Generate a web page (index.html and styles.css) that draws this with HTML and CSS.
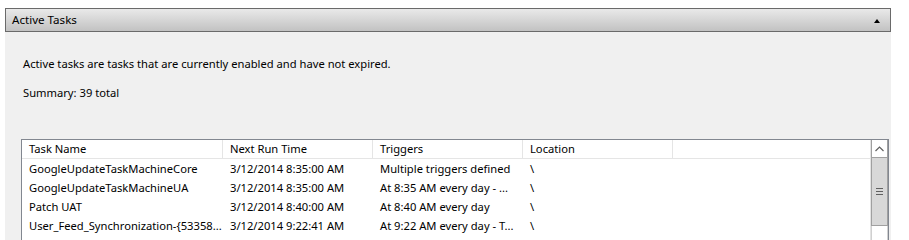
FILE: index.html
```html
<!DOCTYPE html>
<html>
<head>
<meta charset="utf-8">
<link rel="stylesheet" href="styles.css">
</head>
<body>
<div class="panel">
  <div class="panel-head">
    <span class="title">Active Tasks</span>
    <span class="collapse"></span>
  </div>
  <div class="panel-body">
    <p class="desc">Active tasks are tasks that are currently enabled and have not expired.</p>
    <p class="summary">Summary: 39 total</p>
    <div class="list">
      <div class="grid">
        <div class="hdr">
          <div class="hc c1">Task Name</div>
          <div class="hc c2">Next Run Time</div>
          <div class="hc c3">Triggers</div>
          <div class="hc c4">Location</div>
          <div class="hc c5"></div>
        </div>
        <div class="row"><div class="c1">GoogleUpdateTaskMachineCore</div><div class="c2">3/12/2014 8:35:00 AM</div><div class="c3">Multiple triggers defined</div><div class="c4">\</div></div>
        <div class="row"><div class="c1">GoogleUpdateTaskMachineUA</div><div class="c2">3/12/2014 8:35:00 AM</div><div class="c3">At 8:35 AM every day - ...</div><div class="c4">\</div></div>
        <div class="row"><div class="c1">Patch UAT</div><div class="c2">3/12/2014 8:40:00 AM</div><div class="c3">At 8:40 AM every day</div><div class="c4">\</div></div>
        <div class="row"><div class="c1">User_Feed_Synchronization-{53358...</div><div class="c2">3/12/2014 9:22:41 AM</div><div class="c3">At 9:22 AM every day - T...</div><div class="c4">\</div></div>
      </div>
      <div class="scroll">
        <div class="arrow"><svg width="9" height="6" viewBox="0 0 9 6"><path d="M0.5 5 L4.5 1 L8.5 5" fill="none" stroke="#606060" stroke-width="1.2"/></svg></div>
        <div class="thumb"><span class="grip"></span></div>
        <div class="track"></div>
      </div>
    </div>
  </div>
</div>
</body>
</html>
```
FILE: styles.css
```css
* { box-sizing: border-box; }
html, body { margin: 0; padding: 0; background: #fff; }
body {
  font-family: "Noto Sans", "Open Sans", sans-serif;
  font-size: 11.2px;
  color: #000;
  width: 909px;
  height: 240px;
  overflow: hidden;
  padding: 8px 0 0 5px;
}
.panel { width: 886px; }
.panel-head {
  height: 24px;
  border: 1px solid #6a6a6a;
  background: linear-gradient(#e9e9e9, #c2c2c2);
  display: flex;
  align-items: center;
  justify-content: space-between;
  padding: 0 10px 0 6px;
}
.title { font-size: 11.6px; color: #000; line-height: 16px; }
.collapse {
  width: 0; height: 0;
  border-left: 3px solid transparent;
  border-right: 3px solid transparent;
  border-bottom: 4px solid #000;
  margin-top: 1px;
}
.panel-body {
  background: #f0f0f0;
  height: 208px;
  overflow: hidden;
  padding: 17px 2px 0 18px;
}
.desc { margin: 0; line-height: 16px; padding-top: 7px; }
.summary { margin: 13px 0 0 0; line-height: 16px; }
.list {
  margin-top: 38px;
  margin-left: -2px;
  background: #fff;
  border: 1px solid #828790;
  height: 120px;
  display: flex;
  width: 868px;
}
.grid { flex: 1; }
.hdr {
  display: flex;
  height: 19px;
  border-bottom: 1px solid #e5e5e5;
  background: #fff;
}
.hc {
  line-height: 18px;
  border-right: 1px solid #e5e5e5;
  padding-left: 7px;
}
.row { display: flex; height: 19px; line-height: 19px; }
.row > div { padding-left: 7px; white-space: nowrap; overflow: hidden; }
.c1 { width: 201px; }
.c2 { width: 150px; }
.c3 { width: 150px; }
.c4 { width: 150px; }
.c5 { flex: 1; border-right: none; }
.scroll {
  width: 18px;
  border-left: 1px solid #e3e3e3;
  display: flex;
  flex-direction: column;
  background: #fff;
}
.arrow {
  height: 18px;
  border: 1px solid #a0a0a0;
  border-top: none;
  display: flex;
  align-items: center;
  justify-content: center;
}
.thumb {
  height: 68px;
  background: #d8d8d8;
  border: 1px solid #a0a0a0;
  border-top: none;
  display: flex;
  align-items: center;
  justify-content: center;
}
.grip {
  width: 7px; height: 7px;
  background: repeating-linear-gradient(#606060 0 1px, transparent 1px 3px);
}
.track { flex: 1; border: 1px solid #d0d0d0; border-top: none; }
```
